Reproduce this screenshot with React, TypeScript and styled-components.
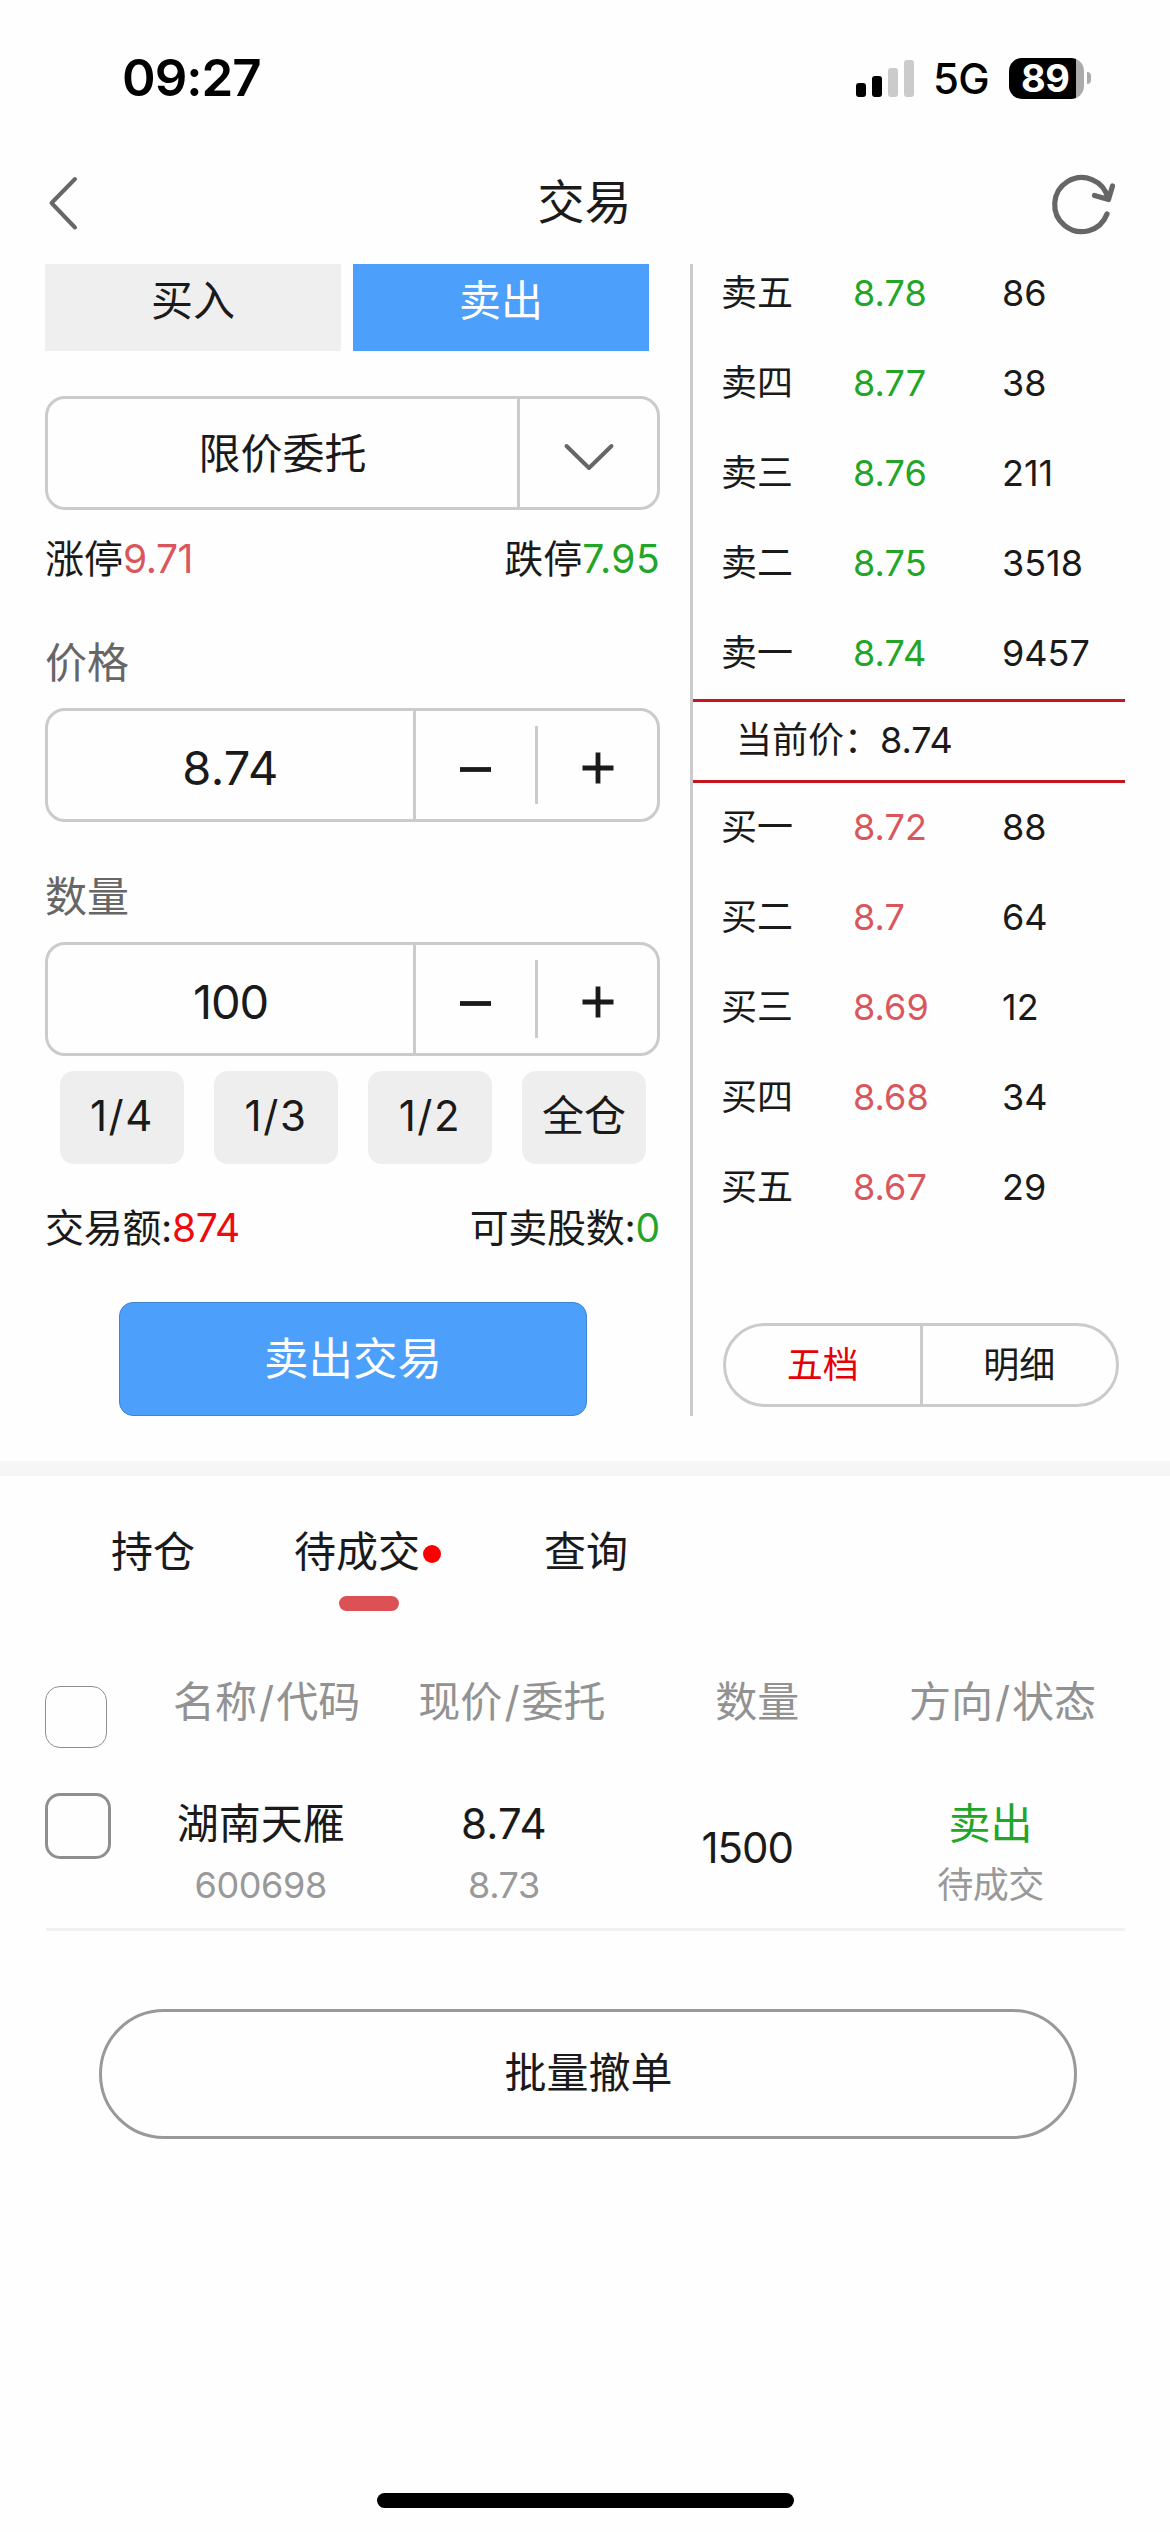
import React from "react";
import styled, { createGlobalStyle } from "styled-components";

const GlobalStyle = createGlobalStyle`
  * { box-sizing: border-box; }
  html, body { margin: 0; padding: 0; background: #fefefe; }
  button { font: inherit; color: inherit; margin: 0; padding: 0; border: 0; background: none; }
`;

const Screen = styled.div`
  width: 1170px;
  height: 2532px;
  background: #fefefe;
  color: #1a1a1a;
  font-family: Inter, "Noto Sans CJK SC", sans-serif;
  font-weight: 370;
  font-size: 42px;
  line-height: 60px;
  white-space: nowrap;
  overflow: hidden;
  display: flex;
  flex-direction: column;
`;

const StatusBar = styled.header`
  height: 156px;
  flex: none;
  display: flex;
  align-items: center;
  justify-content: space-between;
  padding: 0 79px 0 122px;
  color: #000;
`;

const Clock = styled.span`
  font-size: 51px;
  font-weight: 600;
  letter-spacing: -1px;
`;

const StatusIcons = styled.div`
  display: flex;
  align-items: center;
`;

const Signal = styled.div`
  display: flex;
  align-items: flex-end;
  gap: 6px;
  height: 37px;
  margin-right: 19px;
`;

const SignalBar = styled.i<{ $h: number; $on?: boolean }>`
  width: 10px;
  height: ${(p) => p.$h}px;
  border-radius: 3px;
  background: ${(p) => (p.$on ? "#000" : "#cbcbcb")};
`;

const Network = styled.span`
  font-size: 42px;
  font-weight: 500;
  letter-spacing: -0.6px;
  width: 76px;
  padding-top: 2px;
`;

const Battery = styled.div`
  width: 75px;
  height: 41px;
  border-radius: 13px;
  background: linear-gradient(90deg, #000 67px, #ababab 67px);
  color: #fff;
  font-size: 38px;
  font-weight: 700;
  line-height: 41px;
  padding-left: 12px;
  letter-spacing: -0.6px;
`;

const BatteryTip = styled.i`
  width: 4px;
  height: 12px;
  margin-left: 3px;
  border-radius: 0 6px 6px 0;
  background: #ababab;
`;

const NavBar = styled.nav`
  height: 108px;
  flex: none;
  display: grid;
  grid-template-columns: 120px 1fr 120px;
  align-items: start;
`;

const NavTitle = styled.h1`
  margin: 16px 1px 0 0;
  font-size: 47px;
  font-weight: inherit;
  text-align: center;
`;

const BackIcon = styled.svg`
  display: block;
  margin: 17px 0 0 43px;
`;

const RefreshIcon = styled.svg`
  display: block;
  margin: 15px 0 0 -4px;
`;

const TradeArea = styled.section`
  height: 1152px;
  flex: none;
  display: flex;
  padding-left: 45px;
`;

const OrderForm = styled.div`
  width: 615px;
  display: flex;
  flex-direction: column;
`;

const SideTabs = styled.div`
  display: flex;
  gap: 12px;
  height: 87px;
  margin-bottom: 45px;
`;

const SideTab = styled.button<{ $active?: boolean }>`
  width: 296px;
  padding-bottom: 13px;
  background: ${(p) => (p.$active ? "#4c9ffb" : "#efefef")};
  color: ${(p) => (p.$active ? "#fff" : "#1a1a1a")};
`;

const Field = styled.div`
  height: 114px;
  flex: none;
  display: flex;
  border: 3px solid #cbcbcb;
  border-radius: 20px;
`;

const FieldValue = styled.div<{ $width: number; $drop?: number; $size?: number; $spacing?: number }>`
  width: ${(p) => p.$width}px;
  font-size: ${(p) => p.$size ?? 42}px;
  letter-spacing: ${(p) => p.$spacing ?? 0}px;
  padding-top: ${(p) => p.$drop ?? 1}px;
  display: flex;
  align-items: center;
  justify-content: center;
  border-right: 3px solid #cbcbcb;
`;

const FieldAction = styled.button<{ $drop?: number }>`
  flex: 1;
  display: flex;
  align-items: center;
  justify-content: center;
  padding-top: ${(p) => p.$drop ?? 0}px;
`;

const StepDivider = styled.i`
  width: 3px;
  height: 78px;
  margin-top: 15px;
  background: #cbcbcb;
`;

const SpreadRow = styled.div<{ $height: number; $spacing?: number }>`
  height: ${(p) => p.$height}px;
  flex: none;
  display: flex;
  align-items: center;
  justify-content: space-between;
  font-size: 39px;
  letter-spacing: ${(p) => p.$spacing ?? 0}px;
`;

const Tone = styled.span<{ $color: string; $spacing?: number }>`
  color: ${(p) => p.$color};
  letter-spacing: ${(p) => p.$spacing ?? 0}px;
`;

const Label = styled.div<{ $top: number }>`
  height: 60px;
  margin: ${(p) => p.$top}px 0 15px;
  color: #666;
`;

const Fractions = styled.div`
  display: flex;
  gap: 30px;
  margin: 15px 0 0 15px;
`;

const Fraction = styled.button<{ $wide?: boolean }>`
  width: 124px;
  height: 93px;
  padding: 0 0 3px;
  border-radius: 14px;
  background: #eee;
  letter-spacing: ${(p) => (p.$wide ? 1.6 : 0)}px;
`;

const SubmitButton = styled.button`
  width: 468px;
  height: 114px;
  margin: 10px 0 0 74px;
  border: 1px solid #3d85cf;
  border-radius: 14px;
  background: #4c9ffb;
  color: #fff;
  font-size: 44.5px;
`;

const Book = styled.div`
  width: 435px;
  margin-left: 30px;
  border-left: 3px solid #cbcbcb;
  font-size: 36px;
`;

const BookSide = styled.div<{ $top: number; $bottom: number }>`
  margin-top: ${(p) => p.$top}px;
  margin-bottom: ${(p) => p.$bottom}px;
`;

const BookRow = styled.div`
  height: 90px;
  display: grid;
  grid-template-columns: 132px 149px 1fr;
  align-items: center;
  padding-left: 28px;
`;

const LastPrice = styled.div`
  height: 84px;
  border-top: 3px solid #c4161c;
  border-bottom: 3px solid #c4161c;
  padding-left: 43px;
  line-height: 77px;
`;

const Segment = styled.div`
  width: 396px;
  height: 84px;
  margin-left: 30px;
  display: flex;
  border: 3px solid #cbcbcb;
  border-radius: 42px;
`;

const SegmentItem = styled.button<{ $active?: boolean }>`
  flex: 1;
  color: ${(p) => (p.$active ? "#e60008" : "#1a1a1a")};
  & + & { border-left: 3px solid #cbcbcb; }
`;

const Band = styled.div`
  height: 15px;
  flex: none;
  margin-top: 45px;
  background: #f6f6f6;
`;

const Tabs = styled.div`
  height: 177px;
  flex: none;
  display: flex;
  padding: 46px 0 0 111px;
`;

const Tab = styled.button<{ $gap?: number }>`
  display: flex;
  flex-direction: column;
  align-items: center;
  margin-right: ${(p) => p.$gap ?? 0}px;
`;

const TabLabel = styled.span`
  display: flex;
  align-items: center;
`;

const Dot = styled.i`
  width: 18px;
  height: 18px;
  margin: 4px 0 0 3px;
  border-radius: 50%;
  background: #fa0000;
`;

const TabMark = styled.i`
  width: 60px;
  height: 15px;
  margin: 14px 0 0 3px;
  border-radius: 8px;
  background: #dc5156;
`;

const TableRow = styled.div<{ $height: number; $lead: number; $col: number; $head?: boolean }>`
  height: ${(p) => p.$height}px;
  flex: none;
  display: grid;
  grid-template-columns: ${(p) => p.$lead}px repeat(4, ${(p) => p.$col}px);
  margin: 0 45px 0 46px;
  color: ${(p) => (p.$head ? "#929292" : "#1a1a1a")};
  border-bottom: ${(p) => (p.$head ? "0" : "3px solid #f1f1f1")};
`;

const Check = styled.i<{ $size: number; $line: number; $top: number }>`
  width: ${(p) => p.$size}px;
  height: ${(p) => p.$size}px;
  margin: ${(p) => p.$top}px 0 0 -1px;
  border: ${(p) => p.$line}px solid #8f8f8f;
  border-radius: 15px;
`;

const Cell = styled.div<{ $top: number; $spacing?: number }>`
  display: flex;
  flex-direction: column;
  align-items: center;
  padding-top: ${(p) => p.$top}px;
  letter-spacing: ${(p) => p.$spacing ?? 0}px;
`;

const HeadText = styled.div`
  display: flex;
  gap: 2px;
`;

const Muted = styled.span`
  margin-top: 1px;
  font-size: 36px;
  color: #999;
  letter-spacing: -0.4px;
`;

const CancelAll = styled.button`
  width: 978px;
  height: 130px;
  flex: none;
  margin: 78px 0 0 99px;
  border: 3px solid #999;
  border-radius: 65px;
  padding: 0 0 3px 1px;
`;

const HomeIndicator = styled.i`
  width: 417px;
  height: 15px;
  flex: none;
  margin: auto auto 24px 377px;
  border-radius: 8px;
  background: #000;
`;

const GREEN = "#22a528";
const ROSE = "#d9575c";

const asks = [
  ["卖五", "8.78", "86"],
  ["卖四", "8.77", "38"],
  ["卖三", "8.76", "211"],
  ["卖二", "8.75", "3518"],
  ["卖一", "8.74", "9457"],
];

const bids = [
  ["买一", "8.72", "88"],
  ["买二", "8.7", "64"],
  ["买三", "8.69", "12"],
  ["买四", "8.68", "34"],
  ["买五", "8.67", "29"],
];

const StepIcon = ({ plus }: { plus?: boolean }) => (
  <svg width="32" height="32" viewBox="0 0 32 32" stroke="#1a1a1a" strokeWidth="4.8">
    <path d={plus ? "M0.5 16H31.5M16 0.5V31.5" : "M0 17.5H31"} />
  </svg>
);

const Stepper = ({ value, spacing }: { value: string; spacing: number }) => (
  <Field>
    <FieldValue $width={368} $size={47} $spacing={spacing} $drop={5}>{value}</FieldValue>
    <FieldAction $drop={6}><StepIcon /></FieldAction>
    <StepDivider />
    <FieldAction $drop={6}><StepIcon plus /></FieldAction>
  </Field>
);

const Quotes = ({ rows, color }: { rows: string[][]; color: string }) => (
  <>
    {rows.map(([name, price, volume]) => (
      <BookRow key={name}>
        <span>{name}</span>
        <Tone $color={color} $spacing={0.1}>{price}</Tone>
        <Tone $color="#1a1a1a">{volume}</Tone>
      </BookRow>
    ))}
  </>
);

const PairHead = ({ first, second }: { first: string; second: string }) => (
  <Cell $top={19}>
    <HeadText>
      <span>{first}</span>
      <span>/</span>
      <span>{second}</span>
    </HeadText>
  </Cell>
);

export default function App() {
  return (
    <Screen>
      <GlobalStyle />
      <StatusBar>
        <Clock>09:27</Clock>
        <StatusIcons>
          <Signal>
            <SignalBar $h={14} $on />
            <SignalBar $h={21} $on />
            <SignalBar $h={29} />
            <SignalBar $h={37} />
          </Signal>
          <Network>5G</Network>
          <Battery>89</Battery>
          <BatteryTip />
        </StatusIcons>
      </StatusBar>

      <NavBar>
        <BackIcon width="36" height="60" viewBox="0 0 36 60" fill="none" stroke="#666" strokeWidth="4" strokeLinecap="round" strokeLinejoin="round">
          <path d="M32 6L8.5 30L32 54.5" />
        </BackIcon>
        <NavTitle>交易</NavTitle>
        <RefreshIcon width="70" height="70" viewBox="0 0 70 70" fill="none" stroke="#666" strokeWidth="5.2" strokeLinecap="round" strokeLinejoin="round">
          <path d="M61 43A27 27 0 1 1 62 27.5" />
          <path d="M48.5 24.5L62.5 28.5L66.5 15" />
        </RefreshIcon>
      </NavBar>

      <TradeArea>
        <OrderForm>
          <SideTabs>
            <SideTab>买入</SideTab>
            <SideTab $active>卖出</SideTab>
          </SideTabs>
          <Field>
            <FieldValue $width={472}>限价委托</FieldValue>
            <FieldAction $drop={5}>
              <svg width="54" height="30" viewBox="0 0 54 30" fill="none" stroke="#666" strokeWidth="4" strokeLinecap="round" strokeLinejoin="round">
                <path d="M4.5 5L27 27L49.5 5" />
              </svg>
            </FieldAction>
          </Field>
          <SpreadRow $height={98}>
            <span>涨停<Tone $color={ROSE} $spacing={-0.5}>9.71</Tone></span>
            <span>跌停<Tone $color={GREEN} $spacing={0.4}>7.95</Tone></span>
          </SpreadRow>
          <Label $top={25}>价格</Label>
          <Stepper value="8.74" spacing={0.3} />
          <Label $top={45}>数量</Label>
          <Stepper value="100" spacing={-1.2} />
          <Fractions>
            <Fraction $wide>1/4</Fraction>
            <Fraction $wide>1/3</Fraction>
            <Fraction $wide>1/2</Fraction>
            <Fraction>全仓</Fraction>
          </Fractions>
          <SpreadRow $height={128} $spacing={-0.3}>
            <span>交易额:<Tone $color="#ee0a10" $spacing={-0.5}>874</Tone></span>
            <span>可卖股数:<Tone $color={GREEN}>0</Tone></span>
          </SpreadRow>
          <SubmitButton>卖出交易</SubmitButton>
        </OrderForm>

        <Book>
          <BookSide $top={-16} $bottom={1}>
            <Quotes rows={asks} color={GREEN} />
          </BookSide>
          <LastPrice>当前价：8.74</LastPrice>
          <BookSide $top={-1} $bottom={91}>
            <Quotes rows={bids} color={ROSE} />
          </BookSide>
          <Segment>
            <SegmentItem $active>五档</SegmentItem>
            <SegmentItem>明细</SegmentItem>
          </Segment>
        </Book>
      </TradeArea>

      <Band />

      <Tabs>
        <Tab $gap={99}>持仓</Tab>
        <Tab $gap={103}>
          <TabLabel>待成交<Dot /></TabLabel>
          <TabMark />
        </Tab>
        <Tab>查询</Tab>
      </Tabs>

      <TableRow $height={118} $lead={98} $col={245.3} $head>
        <Check $size={62} $line={1} $top={33} />
        <PairHead first="名称" second="代码" />
        <PairHead first="现价" second="委托" />
        <Cell $top={19}>数量</Cell>
        <PairHead first="方向" second="状态" />
      </TableRow>
      <TableRow $height={160} $lead={93} $col={243.3}>
        <Check $size={66} $line={3} $top={22} />
        <Cell $top={23}>湖南天雁<Muted>600698</Muted></Cell>
        <Cell $top={23}><Tone $color="#1a1a1a" $spacing={0.2}>8.74</Tone><Muted>8.73</Muted></Cell>
        <Cell $top={47} $spacing={-1}>1500</Cell>
        <Cell $top={23}><Tone $color={GREEN}>卖出</Tone><Muted>待成交</Muted></Cell>
      </TableRow>

      <CancelAll>批量撤单</CancelAll>
      <HomeIndicator />
    </Screen>
  );
}
